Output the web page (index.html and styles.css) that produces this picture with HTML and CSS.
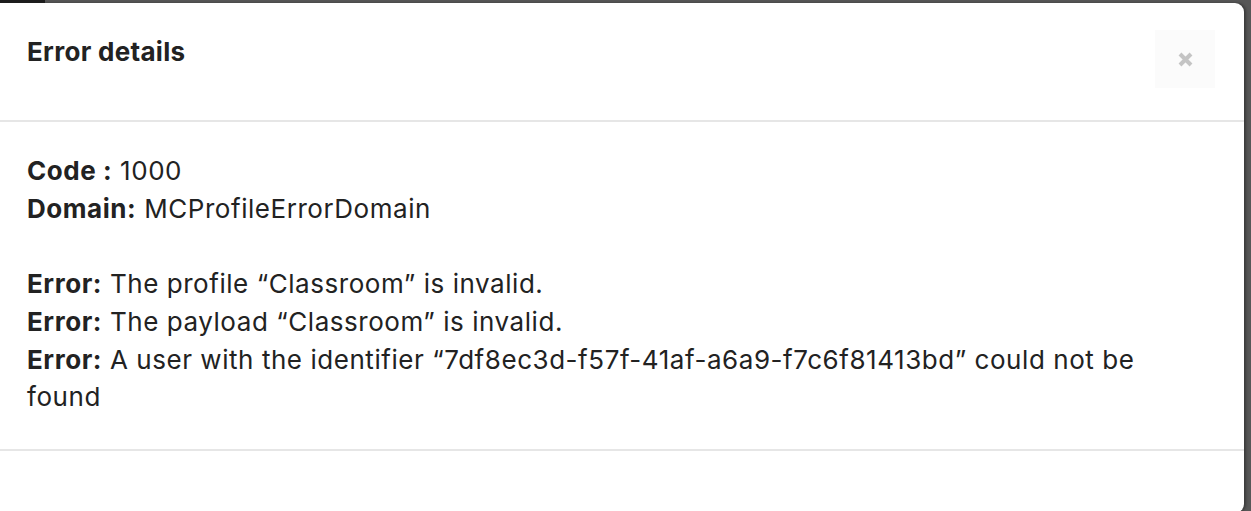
FILE: index.html
```html
<!DOCTYPE html>
<html>
<head>
<meta charset="utf-8">
<link rel="stylesheet" href="styles.css">
</head>
<body>
<div class="backdrop-strip"><span class="strip-dark"></span></div>
<div class="modal">
  <div class="modal-header">
    <h4 class="modal-title">Error details</h4>
    <button class="close-btn" aria-label="Close">
      <svg width="17" height="17" viewBox="0 0 17 17"><path d="M3 3 L14 14 M14 3 L3 14" stroke="#c4c4c4" stroke-width="4" stroke-linecap="butt"/></svg>
    </button>
  </div>
  <div class="modal-body">
    <p class="row"><b>Code :</b> 1000</p>
    <p class="row"><b>Domain:</b> MCProfileErrorDomain</p>
    <p class="row blank">&nbsp;</p>
    <p class="row"><b>Error:</b> The profile “Classroom” is invalid.</p>
    <p class="row"><b>Error:</b> The payload “Classroom” is invalid.</p>
    <p class="row"><b>Error:</b> A user with the identifier “7df8ec3d-f57f-41af-a6a9-f7c6f81413bd” could not be found</p>
  </div>
  <div class="modal-footer"></div>
</div>
</body>
</html>
```
FILE: styles.css
```css
html, body {
  margin: 0;
  padding: 0;
  background: #575757;
  height: 511px;
  overflow: hidden;
  font-family: Inter, "Liberation Sans", Arial, sans-serif;
}
.backdrop-strip {
  height: 3px;
  display: flex;
}
.strip-dark {
  width: 45px;
  background: #1c1c1c;
}
.modal {
  width: 1244px;
  background: #fff;
  border-radius: 0 9px 9px 0;
  color: #222;
  box-shadow: 2px 0 3px rgba(0,0,0,0.35);
}
.modal-header {
  display: flex;
  justify-content: space-between;
  align-items: flex-start;
  padding: 27px 29px 32px 27px;
  border-bottom: 2px solid #e6e6e6;
}
.modal-title {
  margin: 7px 0 0;
  font-size: 26px;
  font-weight: 700;
  line-height: 30px;
  letter-spacing: 0.3px;
}
.close-btn {
  width: 60px;
  height: 58px;
  border: none;
  background: #fbfbfb;
  display: flex;
  align-items: center;
  justify-content: center;
  padding: 0;
}
.modal-body {
  padding: 30px 45px 33px 27px;
  font-size: 26px;
  line-height: 37.7px;
  letter-spacing: 0.55px;
}
.row {
  margin: 0;
}
.row b {
  font-weight: 700;
}
.modal-footer {
  border-top: 2px solid #e6e6e6;
  height: 62px;
}
```
